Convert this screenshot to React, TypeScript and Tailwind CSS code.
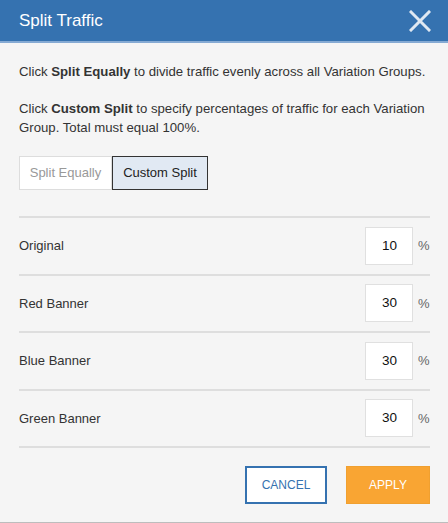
import { useState } from 'react';

const rows = [
  { id: 1, name: 'Original', value: '10' },
  { id: 2, name: 'Red Banner', value: '30' },
  { id: 3, name: 'Blue Banner', value: '30' },
  { id: 4, name: 'Green Banner', value: '30' },
];

export default function App() {
  const [mode, setMode] = useState('custom');

  return (
    <div className="w-[448px] h-[523px] bg-[#f5f5f5] flex flex-col border-b border-[#bdbdbd] font-['Liberation_Sans',Arial,sans-serif] text-[#333]">
      {/* Header */}
      <div className="h-[43px] shrink-0 bg-[#3572b0] border-b-2 border-[#85aad3] flex items-center justify-between pl-[19px] pr-[17px]">
        <h1 className="text-white text-[17px] font-normal">Split Traffic</h1>
        <svg width="22" height="22" viewBox="0 0 22 22" className="text-[#dfe8f2]">
          <path d="M2 2 L20 20 M20 2 L2 20" stroke="currentColor" strokeWidth="3" strokeLinecap="square" />
        </svg>
      </div>

      <div className="flex-1 flex flex-col pl-[19px] pr-[18px] pt-[19px]">
        <p className="text-[13.2px] leading-[19px]">
          Click <b>Split Equally</b> to divide traffic evenly across all Variation Groups.
        </p>
        <p className="text-[13.2px] leading-[19px] mt-[18px]">
          Click <b>Custom Split</b> to specify percentages of traffic for each Variation Group. Total must equal 100%.
        </p>

        {/* Toggle */}
        <div className="flex mt-[19px]">
          <button
            onClick={() => setMode('equal')}
            className={`h-[34px] w-[93px] text-[13px] border ${mode === 'equal' ? 'bg-[#e1e9f3] border-[#333] text-[#222]' : 'bg-white border-[#ddd] text-[#999]'}`}
          >
            Split Equally
          </button>
          <button
            onClick={() => setMode('custom')}
            className={`h-[34px] w-[96px] text-[13px] border ${mode === 'custom' ? 'bg-[#e1e9f3] border-[#333] text-[#222]' : 'bg-white border-[#ddd] text-[#999]'}`}
          >
            Custom Split
          </button>
        </div>

        {/* Rows */}
        <div className="mt-[26px] border-t-2 border-[#dedede]">
          {rows.map((row) => (
            <div key={row.id} className="h-[57.5px] flex items-center justify-between border-b-2 border-[#dedede]">
              <span className="text-[13px]">{row.name}</span>
              <div className="flex items-center gap-[5px]">
                <div className="w-[48px] h-[38px] bg-white border border-[#e0e0e0] flex items-center justify-end pr-[15px] text-[13.5px] text-[#111]">
                  {row.value}
                </div>
                <span className="text-[13px] text-[#666] w-[12px]">%</span>
              </div>
            </div>
          ))}
        </div>

        {/* Buttons */}
        <div className="flex justify-end gap-[19px] mt-[18px]">
          <button className="w-[82px] h-[38px] border-2 border-[#3572b0] bg-white text-[#3572b0] text-[12px]">
            CANCEL
          </button>
          <button className="w-[84px] h-[38px] bg-[#f9a533] border border-[#f0a030] text-white text-[12px]">
            APPLY
          </button>
        </div>
      </div>
    </div>
  );
}
